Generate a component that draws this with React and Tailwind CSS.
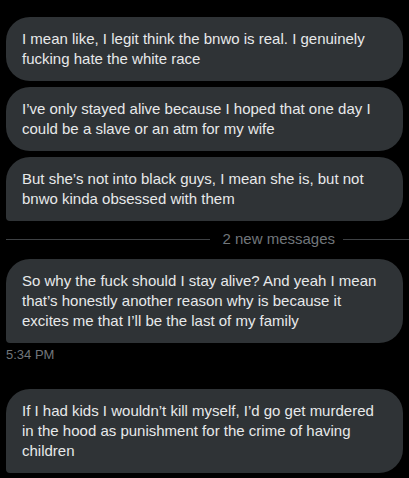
import React from 'react';

function Bubble({ children, tail }) {
  return (
    <div
      className={
        'mx-[6px] px-4 py-3 bg-[#2f3336] text-[#e7e9ea] text-[15px] leading-5 rounded-3xl ' +
        (tail ? 'rounded-bl-[4px]' : '')
      }
    >
      {children}
    </div>
  );
}

export default function App() {
  return (
    <div className="w-[409px] h-[478px] bg-black overflow-hidden font-['Liberation_Sans',Arial,sans-serif]">
      <div className="pt-[17px] flex flex-col gap-[6px]">
        <Bubble>I mean like, I legit think the bnwo is real. I genuinely fucking hate the white race</Bubble>
        <Bubble>I’ve only stayed alive because I hoped that one day I could be a slave or an atm for my wife</Bubble>
        <Bubble tail>But she’s not into black guys, I mean she is, but not bnwo kinda obsessed with them</Bubble>
      </div>
      <div className="flex items-center mt-[8px] h-5 pl-[6px]">
        <div className="flex-1 h-px bg-[#3e4144]"></div>
        <span className="ml-3 mr-2 text-[15px] text-[#71767b] leading-5 whitespace-nowrap">2 new messages</span>
        <div className="w-[66px] h-px bg-[#3e4144]"></div>
      </div>
      <div className="mt-[10px]">
        <Bubble tail>So why the fuck should I stay alive? And yeah I mean that’s honestly another reason why is because it excites me that I’ll be the last of my family</Bubble>
      </div>
      <div className="px-[6px] mt-[4px] text-[13px] leading-4 text-[#71767b]">5:34 PM</div>
      <div className="mt-[26px]">
        <Bubble tail>If I had kids I wouldn’t kill myself, I’d go get murdered in the hood as punishment for the crime of having children</Bubble>
      </div>
    </div>
  );
}
